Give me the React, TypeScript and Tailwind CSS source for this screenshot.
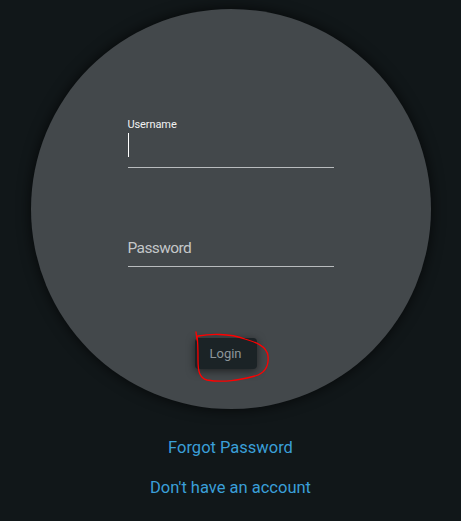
export default function App() {
  return (
    <div className="flex min-h-screen flex-col items-center bg-[#111719] font-['Roboto',sans-serif]">
      <div className="mt-[9px] flex h-[400px] w-[400px] flex-col items-center rounded-full bg-[#43484b] pt-[108px] shadow-[0_0_14px_rgba(0,0,0,0.7)]">
        <div className="flex w-[206px] flex-col">
          <label className="h-4 text-[11px] leading-4 tracking-[-0.1px] text-[#f1f2f2]">Username</label>
          <div className="h-[35px] border-b border-[#b9bcbe]">
            <div className="h-[24px] w-[1.5px] bg-white" />
          </div>
          <div className="mt-[68px] border-b border-[#b9bcbe] pb-[6px] text-[15.5px] leading-6 tracking-[-0.6px] text-[#c4c7c9]">
            Password
          </div>
        </div>
        <div className="relative mt-[71px] mr-[10px]">
          <button className="h-[31px] w-[62px] rounded bg-[#1b2326] text-[13px] text-[#8d969a] shadow-[0_2px_8px_rgba(0,0,0,0.55)]">
            Login
          </button>
          <svg
            className="pointer-events-none absolute left-[-6px] top-[-10px]"
            width="90"
            height="62"
            viewBox="0 0 90 62"
            fill="none"
          >
            <path
              d="M7 4 L8 12 M9 8 C20 6 40 5 56 11 C66 14 78 18 79 28 C80 38 76 45 66 48 C50 52 35 55 18 52 C10 50 9 42 9 32 C9 22 9 14 8 8"
              stroke="#ff0000"
              strokeWidth="1.3"
              strokeLinecap="round"
              strokeLinejoin="round"
            />
          </svg>
        </div>
      </div>
      <a className="mt-[27px] text-[16.5px] leading-6 text-[#3a9fd8]">Forgot Password</a>
      <a className="mt-4 text-[16.5px] leading-6 text-[#3a9fd8]">Don't have an account</a>
    </div>
  );
}
